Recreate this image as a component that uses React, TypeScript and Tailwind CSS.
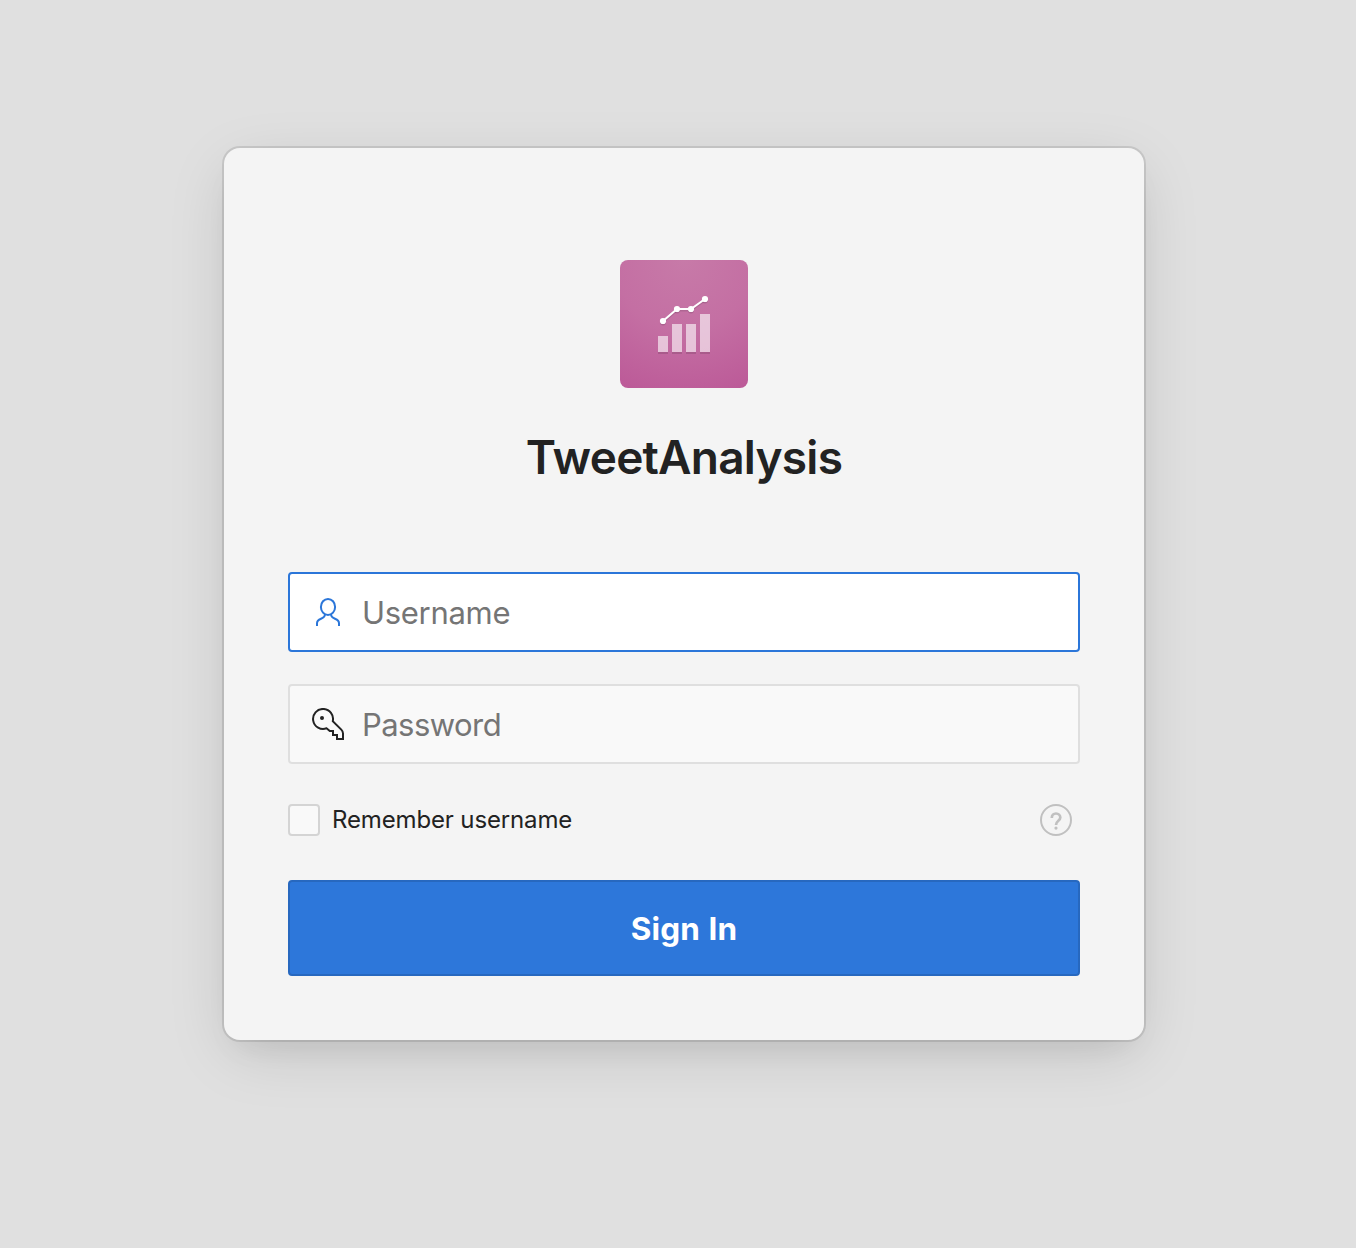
import React from "react";

function LogoIcon() {
  return (
    <svg viewBox="0 0 128 128" className="h-32 w-32 rounded-lg" aria-hidden="true">
      <defs>
        <radialGradient id="tile" cx="64" cy="0" r="140" gradientUnits="userSpaceOnUse">
          <stop offset="0" stopColor="#c77aa8" />
          <stop offset="0.5" stopColor="#c46fa3" />
          <stop offset="1" stopColor="#bc5a98" />
        </radialGradient>
      </defs>
      <rect width="128" height="128" fill="url(#tile)" />
      <g fill="#000" fillOpacity="0.12">
        <path d="M38 92h10v2H38zM52 92h10v2H52zM66 92h10v2H66zM80 92h10v2H80z" />
        <g transform="translate(0 1.5)">
          <path d="M43 61 57 49H71L85 39" fill="none" stroke="#000" strokeOpacity="0.1" strokeWidth="2" />
          <circle cx="43" cy="61" r="3" />
          <circle cx="57" cy="49" r="3" />
          <circle cx="71" cy="49" r="3" />
          <circle cx="85" cy="39" r="3" />
        </g>
      </g>
      <path d="M38 76h10v16H38zM52 64h10v28H52zM66 64h10v28H66zM80 54h10v38H80z" fill="#fff" fillOpacity="0.6" />
      <path d="M43 61 57 49H71L85 39" fill="none" stroke="#fff" strokeWidth="2" />
      <g fill="#fff">
        <circle cx="43" cy="61" r="3.1" />
        <circle cx="57" cy="49" r="3.1" />
        <circle cx="71" cy="49" r="3.1" />
        <circle cx="85" cy="39" r="3.1" />
      </g>
    </svg>
  );
}

function UserIcon() {
  return (
    <svg viewBox="0 0 32 32" className="h-8 w-8 shrink-0 text-[#2b76d9]" fill="none" stroke="currentColor" strokeWidth="2" aria-hidden="true">
      <ellipse cx="16" cy="10.9" rx="7.1" ry="8" />
      <path d="M12.9 18.2C13.2 20.9 11.2 21.9 9 22.8C6.6 23.8 5 24.5 5 27.3V30M19.1 18.2C18.8 20.9 20.8 21.9 23 22.8C25.4 23.8 27 24.5 27 27.3V30" />
    </svg>
  );
}

function KeyIcon() {
  return (
    <svg viewBox="0 0 32 32" className="h-8 w-8 shrink-0 text-[#222]" fill="none" stroke="currentColor" strokeWidth="2" aria-hidden="true">
      <path d="M14.6 20.3A10 10 0 1 1 20.8 13.2L29.3 21.6C30.5 22.8 31 23.9 31 25.5V31H25V27H21V23H17.8Z" />
      <circle cx="10" cy="10" r="2" fill="currentColor" stroke="none" />
    </svg>
  );
}

function HelpIcon() {
  return (
    <svg viewBox="0 0 32 32" className="h-8 w-8" fill="none" stroke="currentColor" aria-hidden="true">
      <circle cx="16" cy="16" r="15" strokeWidth="2" />
      <path d="M11.8 14C11.8 11.4 13.5 9.5 16 9.5S20.3 11.2 20.3 13.5C20.3 16.8 16 16.8 16 21" strokeWidth="2.7" />
      <circle cx="16" cy="24.1" r="1.6" fill="currentColor" stroke="none" />
    </svg>
  );
}

export default function App() {
  return (
    <main className="flex min-h-[1248px] justify-center bg-[#e0e0e0] pt-[148px] pl-3 font-['Inter',sans-serif] text-[#222]">
      <form
        onSubmit={(e) => e.preventDefault()}
        className="flex h-[892px] w-[920px] flex-col rounded-2xl bg-[#f4f4f4] px-16 pt-28 shadow-[0_0_0_2px_rgba(0,0,0,0.1),0_16px_64px_-8px_rgba(0,0,0,0.15),0_16px_32px_-12px_rgba(0,0,0,0.07)]"
      >
        <div className="flex flex-col items-center">
          <LogoIcon />
          <h1 className="mt-[39px] text-[46px] leading-[60px] font-semibold tracking-[-0.75px]">TweetAnalysis</h1>
        </div>
        <label className="mt-[85px] flex h-20 items-center rounded-[4px] border-2 border-[#2b76d9] bg-white pl-[22px]">
          <UserIcon />
          <input type="text" aria-label="Username" placeholder="Username" className="ml-[18px] h-full flex-1 bg-transparent text-[31px] tracking-[-0.3px] outline-none placeholder:text-[#757575]" />
        </label>
        <label className="mt-8 flex h-20 items-center rounded-[4px] border-2 border-[#dfdfdf] bg-[#f9f9f9] pl-[22px]">
          <KeyIcon />
          <input type="password" aria-label="Password" placeholder="Password" className="ml-[18px] h-full flex-1 bg-transparent text-[31px] tracking-[-0.55px] outline-none placeholder:text-[#757575]" />
        </label>
        <div className="mt-10 flex h-8 items-center justify-between pr-2">
          <label className="flex items-center gap-3 text-2xl leading-8 tracking-[-0.14px]">
            <input type="checkbox" className="h-8 w-8 appearance-none rounded-[4px] border-2 border-[#d4d4d4] bg-[#f9f9f9]" />
            <span>Remember username</span>
          </label>
          <button type="button" aria-label="Help" className="text-[#c0c0c0]">
            <HelpIcon />
          </button>
        </div>
        <button type="submit" className="mt-11 h-24 rounded-[4px] border-2 border-[#2768bf] bg-[#2d77da] pt-px text-[31.5px] font-bold tracking-[0.1px] text-white [word-spacing:1px]">
          Sign In
        </button>
      </form>
    </main>
  );
}
